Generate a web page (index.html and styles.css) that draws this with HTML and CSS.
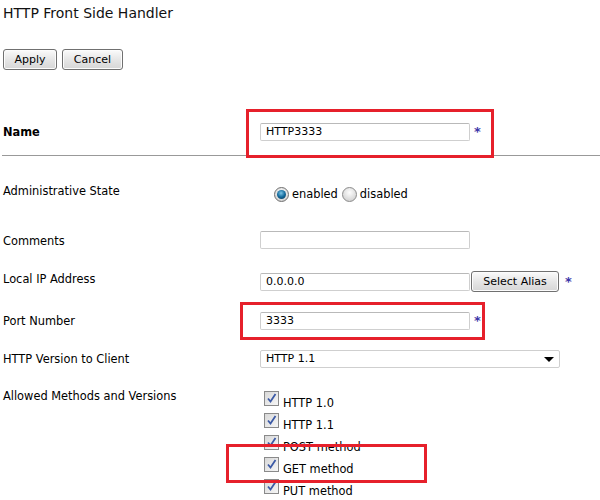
FILE: index.html
```html
<!DOCTYPE html>
<html>
<head>
<meta charset="utf-8">
<link rel="stylesheet" href="styles.css">
</head>
<body>
<div class="page">
  <h1 class="title">HTTP Front Side Handler</h1>
  <div class="actions">
    <button class="btn btn-apply">Apply</button>
    <button class="btn btn-cancel">Cancel</button>
  </div>

  <div class="row row-name">
    <div class="label bold">Name</div>
    <div class="control">
      <span class="field">HTTP3333</span><span class="req">*</span>
    </div>
  </div>
  <div class="rule"></div>

  <div class="row row-admin">
    <div class="label">Administrative State</div>
    <div class="control radios">
      <span class="radio on"></span><span class="rlabel">enabled</span>
      <span class="radio"></span><span class="rlabel">disabled</span>
    </div>
  </div>

  <div class="row row-comments">
    <div class="label">Comments</div>
    <div class="control"><span class="field"></span></div>
  </div>

  <div class="row row-ip">
    <div class="label">Local IP Address</div>
    <div class="control">
      <span class="field">0.0.0.0</span><button class="btn btn-alias">Select Alias</button><span class="req req-alias">*</span>
    </div>
  </div>

  <div class="row row-port">
    <div class="label">Port Number</div>
    <div class="control">
      <span class="field">3333</span><span class="req">*</span>
    </div>
  </div>

  <div class="row row-version">
    <div class="label">HTTP Version to Client</div>
    <div class="control">
      <span class="select">HTTP 1.1<span class="caret"></span></span>
    </div>
  </div>

  <div class="row row-allowed">
    <div class="label">Allowed Methods and Versions</div>
    <div class="control checks">
      <div class="check"><span class="box"><svg viewBox="0 0 13 13" width="13" height="13"><path d="M3 6.5 L5.5 9.5 L10.5 2" fill="none" stroke="#3c5aa6" stroke-width="1.8"/></svg></span><span class="clabel">HTTP 1.0</span></div>
      <div class="check"><span class="box"><svg viewBox="0 0 13 13" width="13" height="13"><path d="M3 6.5 L5.5 9.5 L10.5 2" fill="none" stroke="#3c5aa6" stroke-width="1.8"/></svg></span><span class="clabel">HTTP 1.1</span></div>
      <div class="check"><span class="box"><svg viewBox="0 0 13 13" width="13" height="13"><path d="M3 6.5 L5.5 9.5 L10.5 2" fill="none" stroke="#3c5aa6" stroke-width="1.8"/></svg></span><span class="clabel">POST method</span></div>
      <div class="check"><span class="box"><svg viewBox="0 0 13 13" width="13" height="13"><path d="M3 6.5 L5.5 9.5 L10.5 2" fill="none" stroke="#3c5aa6" stroke-width="1.8"/></svg></span><span class="clabel">GET method</span></div>
      <div class="check"><span class="box"><svg viewBox="0 0 13 13" width="13" height="13"><path d="M3 6.5 L5.5 9.5 L10.5 2" fill="none" stroke="#3c5aa6" stroke-width="1.8"/></svg></span><span class="clabel">PUT method</span></div>
    </div>
  </div>

  <div class="mark mark-name"></div>
  <div class="mark mark-port"></div>
  <div class="mark mark-get"></div>
</div>
</body>
</html>
```
FILE: styles.css
```css
html, body {
  margin: 0;
  padding: 0;
  background: #ffffff;
  overflow: hidden;
}
.page {
  position: relative;
  width: 600px;
  height: 500px;
  font-family: "DejaVu Sans", Verdana, sans-serif;
  font-size: 11px;
  color: #000;
}
.title {
  margin: 0;
  padding: 5px 0 0 3px;
  height: 20px;
  font-size: 14px;
  font-weight: normal;
  line-height: 16px;
  color: #111;
}
.actions {
  display: flex;
  gap: 5px;
  padding: 24px 0 0 3px;
  height: 21px;
}
.btn {
  font-family: "DejaVu Sans", Verdana, sans-serif;
  font-size: 11px;
  color: #000;
  height: 21px;
  padding: 0;
  border: 1px solid #707070;
  border-radius: 3px;
  background: linear-gradient(#fbfbfb, #e6e6e6 50%, #d6d6d6);
  box-shadow: inset 0 0 0 1px #fcfcfc;
}
.btn-apply { width: 54px; }
.btn-cancel { width: 61px; }

.row {
  display: flex;
  align-items: flex-start;
}
.label {
  width: 257px;
  padding-left: 3px;
  font-size: 11.4px;
  line-height: 13px;
  flex: none;
}
.bold { font-weight: bold; }
.control {
  display: flex;
  align-items: center;
}
.field {
  box-sizing: border-box;
  width: 210px;
  height: 18px;
  border: 1px solid #cfcfcf;
  border-top-color: #b9b9b9;
  border-radius: 2px;
  padding: 0 5px;
  line-height: 16px;
  background: #fff;
  color: #000;
}
.req {
  color: #3b35a8;
  font-weight: bold;
  font-size: 13px;
  margin-left: 4px;
  line-height: 14px;
}
.req-alias { margin-left: 6px; }

.row-name { margin-top: 53px; }
.row-name .label { padding-top: 3px; }
.rule {
  margin: 14px 0 0 2px;
  height: 1px;
  background: #999;
}

.row-admin { margin-top: 28px; }
.row-admin .label { padding-top: 1px; }
.radios { padding-top: 3px; padding-left: 14px; }
.radio {
  box-sizing: border-box;
  width: 15px;
  height: 15px;
  border-radius: 50%;
  border: 1px solid #8a8a8a;
  background: radial-gradient(circle at 50% 35%, #fdfdfd, #d8d8d8 70%, #c4c4c4);
  margin-right: 3px;
  flex: none;
  position: relative;
}
.radio.on {
  border-color: #6f6f6f;
}
.radio.on::after {
  content: "";
  position: absolute;
  left: 2px;
  top: 2px;
  width: 9px;
  height: 9px;
  border-radius: 50%;
  background: radial-gradient(circle at 45% 35%, #7cc4e6, #136a9c 50%, #07314f);
}
.rlabel { margin-right: 4px; font-size: 11.4px; line-height: 13px; }

.row-comments { margin-top: 29px; }
.row-comments .label { padding-top: 4px; }

.row-ip { margin-top: 22px; }
.row-ip .label { padding-top: 2px; }
.btn-alias {
  width: 88px;
  height: 21px;
  margin-left: 1px;
}

.row-port { margin-top: 20px; }
.row-port .label { padding-top: 3px; }

.row-version { margin-top: 20px; }
.row-version .label { padding-top: 3px; }
.select {
  box-sizing: border-box;
  position: relative;
  width: 300px;
  height: 18px;
  border: 1px solid #cfcfcf;
  border-radius: 2px;
  padding: 0 5px;
  line-height: 16px;
  background: #fff;
}
.caret {
  position: absolute;
  right: 5px;
  top: 6px;
  width: 0;
  height: 0;
  border-left: 5px solid transparent;
  border-right: 5px solid transparent;
  border-top: 5px solid #000;
}

.row-allowed { margin-top: 21px; }
.row-allowed .label { padding-top: 1px; }
.checks {
  flex-direction: column;
  align-items: flex-start;
  padding-left: 4px;
  padding-top: 2px;
}
.check {
  display: flex;
  align-items: flex-start;
  height: 22px;
}
.box {
  box-sizing: border-box;
  width: 15px;
  height: 15px;
  border: 1px solid #8a8a8a;
  background: linear-gradient(135deg, #d8d8d8, #f6f6f6);
  display: flex;
  align-items: center;
  justify-content: center;
  flex: none;
}
.box svg { display: block; }
.clabel {
  margin-left: 4px;
  margin-top: 6px;
  font-size: 11.4px;
  line-height: 13px;
}

.mark {
  position: absolute;
  border: 3px solid #e6202b;
  box-sizing: border-box;
}
.mark-name { left: 246px; top: 109px; width: 248px; height: 49px; }
.mark-port { left: 240px; top: 302px; width: 245px; height: 38px; }
.mark-get { left: 226px; top: 444px; width: 201px; height: 39px; }
```
